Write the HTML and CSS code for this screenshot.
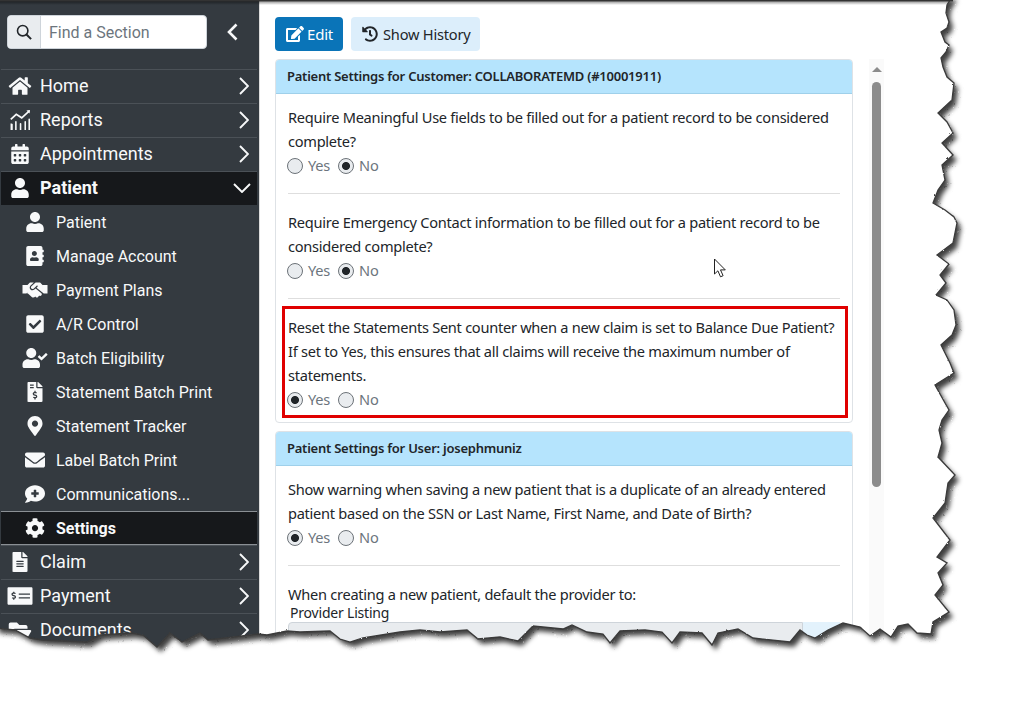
FILE: index.html
```html
<!DOCTYPE html>
<html lang="en">
<head>
<meta charset="utf-8">
<title>Patient Settings</title>
<link rel="stylesheet" href="styles.css">
</head>
<body>
<svg class="defs" aria-hidden="true">
  <symbol id="i-home" viewBox="0 0 576 512"><path d="M280.37 148.26L96 300.11V464a16 16 0 0 0 16 16l112.06-.29a16 16 0 0 0 15.92-16V368a16 16 0 0 1 16-16h64a16 16 0 0 1 16 16v95.64a16 16 0 0 0 16 16.05L464 480a16 16 0 0 0 16-16V300L295.67 148.26a12.19 12.19 0 0 0-15.3 0zM571.6 251.47L488 182.56V44.05a12 12 0 0 0-12-12h-56a12 12 0 0 0-12 12v72.61L318.47 43a48 48 0 0 0-61 0L4.34 251.47a12 12 0 0 0-1.6 16.9l25.5 31A12 12 0 0 0 45.15 301l235.22-193.74a12.19 12.19 0 0 1 15.3 0L530.9 301a12 12 0 0 0 16.9-1.6l25.5-31a12 12 0 0 0-1.7-16.93z"/></symbol>
  <symbol id="i-chart" viewBox="0 0 512 512"><path d="M14 512V352a14 14 0 0 1 28 0h0 14a14 14 0 0 1 14 14v146zM130 512V300a20 20 0 0 1 40 0v212zM250 512V350a20 20 0 0 1 40 0v162zM370 512V300a20 20 0 0 1 40 0v212zM472 512V240a20 20 0 0 1 40 0v272z"/><path d="M20 240L160 110L300 200L490 30" fill="none" stroke="currentColor" stroke-width="44"/><path d="M420 10L512 0L500 90z"/></symbol>
  <symbol id="i-cal" viewBox="0 0 448 512"><path d="M0 464c0 26.5 21.5 48 48 48h352c26.5 0 48-21.5 48-48V192H0v272zm320-196c0-6.6 5.4-12 12-12h40c6.6 0 12 5.4 12 12v40c0 6.6-5.4 12-12 12h-40c-6.6 0-12-5.4-12-12v-40zm0 128c0-6.6 5.4-12 12-12h40c6.6 0 12 5.4 12 12v40c0 6.6-5.4 12-12 12h-40c-6.6 0-12-5.4-12-12v-40zM192 268c0-6.6 5.4-12 12-12h40c6.6 0 12 5.4 12 12v40c0 6.6-5.4 12-12 12h-40c-6.6 0-12-5.4-12-12v-40zm0 128c0-6.6 5.4-12 12-12h40c6.6 0 12 5.4 12 12v40c0 6.6-5.4 12-12 12h-40c-6.6 0-12-5.4-12-12v-40zM64 268c0-6.6 5.4-12 12-12h40c6.6 0 12 5.4 12 12v40c0 6.6-5.4 12-12 12H76c-6.6 0-12-5.4-12-12v-40zm0 128c0-6.6 5.4-12 12-12h40c6.6 0 12 5.4 12 12v40c0 6.6-5.4 12-12 12H76c-6.6 0-12-5.4-12-12v-40zM400 64h-48V16c0-8.8-7.2-16-16-16h-32c-8.8 0-16 7.2-16 16v48H160V16c0-8.8-7.2-16-16-16h-32c-8.8 0-16 7.2-16 16v48H48C21.5 64 0 85.5 0 112v48h448v-48c0-26.5-21.5-48-48-48z"/></symbol>
  <symbol id="i-user" viewBox="0 0 448 512"><path d="M224 256c70.7 0 128-57.3 128-128S294.7 0 224 0 96 57.3 96 128s57.3 128 128 128zm89.6 32h-16.7c-22.2 10.2-46.9 16-72.9 16s-50.6-5.8-72.9-16h-16.7C60.2 288 0 348.2 0 422.4V464c0 26.5 21.5 48 48 48h352c26.5 0 48-21.5 48-48v-41.6c0-74.2-60.2-134.4-134.4-134.4z"/></symbol>
  <symbol id="i-book" viewBox="0 0 448 512"><path d="M436 160c6.6 0 12-5.4 12-12v-40c0-6.6-5.4-12-12-12h-20V48c0-26.5-21.5-48-48-48H48C21.5 0 0 21.5 0 48v416c0 26.5 21.5 48 48 48h320c26.5 0 48-21.5 48-48v-48h20c6.6 0 12-5.4 12-12v-40c0-6.6-5.4-12-12-12h-20v-64h20c6.6 0 12-5.4 12-12v-40c0-6.6-5.4-12-12-12h-20v-64h20zm-228-32c35.3 0 64 28.7 64 64s-28.7 64-64 64-64-28.7-64-64 28.7-64 64-64zm112 236.8c0 10.6-10 19.2-22.4 19.2H118.4C106 384 96 375.4 96 364.8v-19.2c0-31.8 30.1-57.6 67.2-57.6h5c12.3 5.1 25.7 8 39.8 8s27.6-2.9 39.8-8h5c37.1 0 67.2 25.8 67.2 57.6v19.2z"/></symbol>
  <symbol id="i-hands" viewBox="0 0 640 512"><path d="M434.7 64h-85.9c-8 0-15.7 3-21.6 8.4l-98.3 90c-.1.1-.2.3-.3.4-16.6 15.6-16.3 40.5-2.1 56 12.7 13.9 39.4 17.6 56.1 2.7.1-.1.3-.1.4-.2l79.9-73.2c6.5-5.9 16.7-5.5 22.6 1 6 6.5 5.5 16.6-1 22.6l-26.1 23.9L504 313.8c2.9 2.4 5.5 5 7.9 7.7V128l-54.6-54.6c-5.9-6-14.1-9.4-22.6-9.4zM512 128.2v190c20 20 40 30 64 30h64V128.2h-128zM0 348h64c17.7 0 52-10 64-30V128.2H0V348zm483.9-9.3L334.6 217.5l-30 27.5c-29.7 27.1-75.2 24.5-101.7-4.4-26.9-29.4-24.8-74.9 4.4-101.7L289.1 64h-83.8c-8.5 0-16.6 3.4-22.6 9.4L128 128v223.9h18.3l90.5 81.9c27.4 22.3 67.7 18.1 90-9.3l.2-.2 17.9 15.5c15.9 13 39.4 10.5 52.3-5.4l31.4-38.6 5.4 4.4c13.7 11.1 33.9 9.1 45-4.7l9.5-11.7c11.2-13.8 9.1-33.9-4.6-45.1z"/></symbol>
  <symbol id="i-check" viewBox="0 0 448 512"><path d="M400 480H48c-26.51 0-48-21.49-48-48V80c0-26.51 21.49-48 48-48h352c26.51 0 48 21.49 48 48v352c0 26.51-21.49 48-48 48zm-204.686-98.059l184-184c6.248-6.248 6.248-16.379 0-22.627l-22.627-22.627c-6.248-6.248-16.379-6.249-22.628 0L184 302.745l-70.059-70.059c-6.248-6.248-16.379-6.248-22.628 0L68.686 255.314c-6.248 6.248-6.248 16.379 0 22.627l104 104c6.249 6.25 16.379 6.25 22.628.001z"/></symbol>
  <symbol id="i-usercheck" viewBox="0 0 640 512"><path d="M224 256c70.7 0 128-57.3 128-128S294.7 0 224 0 96 57.3 96 128s57.3 128 128 128zm89.6 32h-16.7c-22.2 10.2-46.9 16-72.9 16s-50.6-5.8-72.9-16h-16.7C60.2 288 0 348.2 0 422.4V464c0 26.5 21.5 48 48 48h352c26.5 0 48-21.5 48-48v-41.6c0-74.2-60.2-134.4-134.4-134.4zm323-128.4l-27.8-28.1c-4.6-4.7-12.1-4.7-16.8-.1l-104.8 104-45.5-45.8c-4.6-4.7-12.1-4.7-16.8-.1l-28.1 27.9c-4.7 4.6-4.7 12.1-.1 16.8l81.7 82.3c4.6 4.7 12.1 4.7 16.8.1l141.3-140.2c4.6-4.7 4.7-12.2.1-16.8z"/></symbol>
  <symbol id="i-invoice" viewBox="0 0 384 512"><path d="M377 105L279.1 7c-4.5-4.5-10.6-7-17-7H256v128h128v-6.1c0-6.3-2.5-12.4-7-16.9zm-153 31V0H24C10.7 0 0 10.7 0 24v464c0 13.3 10.7 24 24 24h336c13.3 0 24-10.7 24-24V160H248c-13.2 0-24-10.8-24-24zM64 72c0-4.42 3.58-8 8-8h80c4.42 0 8 3.58 8 8v16c0 4.42-3.58 8-8 8H72c-4.42 0-8-3.58-8-8V72zm0 80v-16c0-4.42 3.58-8 8-8h80c4.42 0 8 3.58 8 8v16c0 4.42-3.58 8-8 8H72c-4.42 0-8-3.58-8-8zm144 263.88V440c0 4.42-3.58 8-8 8h-16c-4.42 0-8-3.58-8-8v-24.29c-11.29-.58-22.27-4.52-31.37-11.35-3.9-2.93-4.1-8.77-.57-12.14l11.75-11.21c2.77-2.64 6.89-2.76 10.13-.73 3.87 2.42 8.26 3.72 12.82 3.72h28.11c6.5 0 11.8-5.92 11.8-13.19 0-5.95-3.61-11.19-8.77-12.73l-45-13.5c-18.59-5.58-31.58-23.42-31.58-43.39 0-24.52 19.05-44.44 42.67-45.07V232c0-4.42 3.58-8 8-8h16c4.42 0 8 3.58 8 8v24.29c11.29.58 22.27 4.51 31.37 11.35 3.9 2.93 4.1 8.77.57 12.14l-11.75 11.21c-2.77 2.64-6.89 2.76-10.13.73-3.87-2.43-8.26-3.72-12.82-3.72h-28.11c-6.5 0-11.8 5.92-11.8 13.19 0 5.95 3.61 11.19 8.77 12.73l45 13.5c18.59 5.58 31.58 23.42 31.58 43.39 0 24.53-19.05 44.44-42.67 45.07z"/></symbol>
  <symbol id="i-pin" viewBox="0 0 384 512"><path d="M172.268 501.67C26.97 291.031 0 268.413 0 192 0 85.961 85.961 0 192 0s192 85.961 192 192c0 76.413-26.97 99.031-172.268 309.67-9.535 13.774-29.93 13.773-39.464 0zM192 272c44.183 0 80-35.817 80-80s-35.817-80-80-80-80 35.817-80 80 35.817 80 80 80z"/></symbol>
  <symbol id="i-mail" viewBox="0 0 512 512"><path d="M502.3 190.8c3.9-3.1 9.7-.2 9.7 4.7V400c0 26.5-21.5 48-48 48H48c-26.5 0-48-21.5-48-48V195.6c0-5 5.7-7.8 9.7-4.7 22.4 17.4 52.1 39.5 154.1 113.6 21.1 15.4 56.7 47.8 92.2 47.6 35.7.3 72-32.8 92.3-47.6 102-74.1 131.6-96.3 154-113.7zM256 320c23.2.4 56.6-29.2 73.4-41.4 132.7-96.3 142.8-104.7 173.4-128.7 5.8-4.5 9.2-11.5 9.2-18.9v-19c0-26.5-21.5-48-48-48H48C21.5 64 0 85.5 0 112v19c0 7.4 3.4 14.3 9.2 18.9 30.6 23.9 40.7 32.4 173.4 128.7 16.8 12.2 50.2 41.8 73.4 41.4z"/></symbol>
  <symbol id="i-comment" viewBox="0 0 512 512"><path d="M256 32C114.62 32 0 125.12 0 240c0 49.56 21.41 95 57 130.74C44.46 421.05 2.7 466 2.2 466.5A8 8 0 0 0 8 480c66.26 0 116-31.75 140.6-51.38A304.66 304.66 0 0 0 256 448c141.39 0 256-93.12 256-208S397.39 32 256 32zm96 232a8 8 0 0 1-8 8h-56v56a8 8 0 0 1-8 8h-48a8 8 0 0 1-8-8v-56h-56a8 8 0 0 1-8-8v-48a8 8 0 0 1 8-8h56v-56a8 8 0 0 1 8-8h48a8 8 0 0 1 8 8v56h56a8 8 0 0 1 8 8z"/></symbol>
  <symbol id="i-cog" viewBox="0 0 512 512"><path d="M487.4 315.7l-42.6-24.6c4.3-23.2 4.3-47 0-70.2l42.6-24.6c4.9-2.8 7.1-8.6 5.5-14-11.1-35.6-30-67.8-54.7-94.6-3.8-4.1-10-5.1-14.8-2.3L380.8 110c-17.9-15.4-38.5-27.3-60.8-35.1V25.8c0-5.6-3.9-10.5-9.4-11.7-36.7-8.2-74.3-7.8-109.2 0-5.5 1.2-9.4 6.1-9.4 11.7V75c-22.2 7.9-42.8 19.8-60.8 35.1L88.7 85.5c-4.9-2.8-11-1.9-14.8 2.3-24.7 26.7-43.6 58.9-54.7 94.6-1.7 5.4.6 11.2 5.5 14L67.3 221c-4.3 23.2-4.3 47 0 70.2l-42.6 24.6c-4.9 2.8-7.1 8.6-5.5 14 11.1 35.6 30 67.8 54.7 94.6 3.8 4.1 10 5.1 14.8 2.3l42.6-24.6c17.9 15.4 38.5 27.3 60.8 35.1v49.2c0 5.6 3.9 10.5 9.4 11.7 36.7 8.2 74.3 7.8 109.2 0 5.5-1.2 9.4-6.1 9.4-11.7v-49.2c22.2-7.9 42.8-19.8 60.8-35.1l42.6 24.6c4.9 2.8 11 1.9 14.8-2.3 24.7-26.7 43.6-58.9 54.7-94.6 1.5-5.5-.7-11.3-5.6-14.1zM256 336c-44.1 0-80-35.9-80-80s35.9-80 80-80 80 35.9 80 80-35.9 80-80 80z"/></symbol>
  <symbol id="i-file" viewBox="0 0 384 512"><path d="M224 136V0H24C10.7 0 0 10.7 0 24v464c0 13.3 10.7 24 24 24h336c13.3 0 24-10.7 24-24V160H248c-13.2 0-24-10.8-24-24zm64 236c0 6.6-5.4 12-12 12H108c-6.6 0-12-5.4-12-12v-8c0-6.6 5.4-12 12-12h168c6.6 0 12 5.4 12 12v8zm0-64c0 6.6-5.4 12-12 12H108c-6.6 0-12-5.4-12-12v-8c0-6.6 5.4-12 12-12h168c6.6 0 12 5.4 12 12v8zm0-72v8c0 6.6-5.4 12-12 12H108c-6.6 0-12-5.4-12-12v-8c0-6.6 5.4-12 12-12h168c6.6 0 12 5.4 12 12zm96-114.1v6.1H256V0h6.1c6.4 0 12.5 2.5 17 7l97.9 98c4.5 4.5 7 10.6 7 16.9z"/></symbol>
  <symbol id="i-money" viewBox="0 0 640 512"><path d="M608 32H32C14.33 32 0 46.33 0 64v384c0 17.67 14.33 32 32 32h576c17.67 0 32-14.33 32-32V64c0-17.67-14.33-32-32-32zM176 327.88V344c0 4.42-3.58 8-8 8h-16c-4.42 0-8-3.58-8-8v-16.29c-11.29-.58-22.27-4.52-31.37-11.35-3.9-2.93-4.1-8.77-.57-12.14l11.75-11.21c2.77-2.64 6.89-2.76 10.13-.73 3.87 2.42 8.26 3.72 12.82 3.72h28.11c6.5 0 11.8-5.92 11.8-13.19 0-5.95-3.61-11.19-8.77-12.73l-45-13.5c-18.59-5.58-31.58-23.42-31.58-43.39 0-24.52 19.05-44.44 42.67-45.07V152c0-4.42 3.58-8 8-8h16c4.42 0 8 3.58 8 8v16.29c11.29.58 22.27 4.51 31.37 11.35 3.9 2.93 4.1 8.77.57 12.14l-11.75 11.21c-2.77 2.64-6.89 2.76-10.13.73-3.87-2.43-8.26-3.72-12.82-3.72h-28.11c-6.5 0-11.8 5.92-11.8 13.19 0 5.95 3.61 11.19 8.77 12.73l45 13.5c18.59 5.58 31.58 23.42 31.58 43.39 0 24.53-19.05 44.44-42.67 45.07zM576 312c0 4.42-3.58 8-8 8H296c-4.42 0-8-3.58-8-8v-16c0-4.42 3.58-8 8-8h272c4.42 0 8 3.58 8 8v16zm0-96c0 4.42-3.58 8-8 8H296c-4.42 0-8-3.58-8-8v-16c0-4.42 3.58-8 8-8h272c4.42 0 8 3.58 8 8v16z"/></symbol>
  <symbol id="i-folder" viewBox="0 0 576 512"><path d="M572.694 292.093L500.27 416.248A63.997 63.997 0 0 1 444.989 448H45.025c-18.523 0-30.064-20.093-20.731-36.093l72.424-124.155A64 64 0 0 1 152 256h399.964c18.523 0 30.064 20.093 20.73 36.093zM152 224h328v-48c0-26.51-21.49-48-48-48H272l-64-64H48C21.49 64 0 85.49 0 112v278.046l69.077-118.418C86.214 242.25 117.989 224 152 224z"/></symbol>
  <symbol id="i-edit" viewBox="0 0 576 512"><path d="M402.6 83.2l90.2 90.2c3.8 3.8 3.8 10 0 13.8L274.4 405.6l-92.8 10.3c-12.4 1.4-22.9-9.1-21.5-21.5l10.3-92.8L388.8 83.2c3.8-3.8 10-3.8 13.8 0zm162-22.9l-48.8-48.8c-15.2-15.2-39.9-15.2-55.2 0l-35.4 35.4c-3.8 3.8-3.8 10 0 13.8l90.2 90.2c3.8 3.8 10 3.8 13.8 0l35.4-35.4c15.2-15.3 15.2-40 0-55.2zM384 346.2V448H64V128h229.8c3.2 0 6.2-1.3 8.5-3.5l40-40c7.6-7.6 2.2-20.5-8.5-20.5H48C21.5 64 0 85.5 0 112v352c0 26.5 21.5 48 48 48h352c26.5 0 48-21.5 48-48V306.2c0-10.7-12.9-16-20.5-8.5l-40 40c-2.2 2.3-3.5 5.3-3.5 8.5z"/></symbol>
  <symbol id="i-history" viewBox="0 0 512 512"><path d="M504 255.531c.253 136.64-111.18 248.372-247.82 248.468-59.015.042-113.223-20.53-155.822-54.911-11.077-8.94-11.905-25.541-1.839-35.607l11.267-11.267c8.609-8.609 22.353-9.551 31.891-1.984C173.062 425.135 212.781 440 256 440c101.705 0 184-82.311 184-184 0-101.705-82.311-184-184-184-48.814 0-93.149 18.969-126.068 49.932l50.754 50.754c10.08 10.08 2.941 27.314-11.313 27.314H24c-8.837 0-16-7.163-16-16V38.627c0-14.254 17.234-21.393 27.314-11.314l49.372 49.372C129.209 34.136 189.552 8 256 8c136.81 0 247.747 110.78 248 247.531zm-180.912 78.784l9.823-12.63c8.138-10.463 6.253-25.542-4.21-33.679L288 256.349V152c0-13.255-10.745-24-24-24h-16c-13.255 0-24 10.745-24 24v135.651l65.409 50.874c10.463 8.137 25.541 6.253 33.679-4.21z"/></symbol>
  <symbol id="i-right" viewBox="0 0 10 18"><path d="M1 1l8 8-8 8" fill="none" stroke="currentColor" stroke-width="1.9"/></symbol>
  <symbol id="i-down" viewBox="0 0 18 10"><path d="M1 1l8 8 8-8" fill="none" stroke="currentColor" stroke-width="1.9"/></symbol>
  <symbol id="i-left" viewBox="0 0 11 18"><path d="M9.5 1.5L2 9l7.5 7.5" fill="none" stroke="currentColor" stroke-width="2.6"/></symbol>
</svg>

<div class="app">
  <aside class="sidebar">
    <div class="search-row">
      <div class="search">
        <span class="search-addon">
          <svg width="16" height="16" viewBox="0 0 16 16"><circle cx="6.7" cy="6.7" r="5.2" fill="none" stroke="#212529" stroke-width="1.6"/><path d="M10.5 10.5l4.6 4.6" stroke="#212529" stroke-width="2" fill="none"/></svg>
        </span>
        <span class="search-input">Find a Section</span>
      </div>
      <svg class="collapse"><use href="#i-left"/></svg>
    </div>
    <nav class="nav">
      <a class="item"><svg class="ic"><use href="#i-home"/></svg><span class="label">Home</span><svg class="chev"><use href="#i-right"/></svg></a>
      <a class="item"><svg class="ic"><use href="#i-chart"/></svg><span class="label">Reports</span><svg class="chev"><use href="#i-right"/></svg></a>
      <a class="item"><svg class="ic"><use href="#i-cal"/></svg><span class="label">Appointments</span><svg class="chev"><use href="#i-right"/></svg></a>
      <a class="item open"><svg class="ic"><use href="#i-user"/></svg><span class="label">Patient</span><svg class="chev-down"><use href="#i-down"/></svg></a>
      <a class="sub"><svg class="ic"><use href="#i-user"/></svg><span>Patient</span></a>
      <a class="sub"><svg class="ic"><use href="#i-book"/></svg><span>Manage Account</span></a>
      <a class="sub"><svg class="ic"><use href="#i-hands"/></svg><span>Payment Plans</span></a>
      <a class="sub"><svg class="ic"><use href="#i-check"/></svg><span>A/R Control</span></a>
      <a class="sub"><svg class="ic"><use href="#i-usercheck"/></svg><span>Batch Eligibility</span></a>
      <a class="sub"><svg class="ic"><use href="#i-invoice"/></svg><span>Statement Batch Print</span></a>
      <a class="sub"><svg class="ic"><use href="#i-pin"/></svg><span>Statement Tracker</span></a>
      <a class="sub"><svg class="ic"><use href="#i-mail"/></svg><span>Label Batch Print</span></a>
      <a class="sub"><svg class="ic"><use href="#i-comment"/></svg><span>Communications...</span></a>
      <a class="sub current"><svg class="ic"><use href="#i-cog"/></svg><span>Settings</span></a>
      <a class="item"><svg class="ic"><use href="#i-file"/></svg><span class="label">Claim</span><svg class="chev"><use href="#i-right"/></svg></a>
      <a class="item"><svg class="ic"><use href="#i-money"/></svg><span class="label">Payment</span><svg class="chev"><use href="#i-right"/></svg></a>
      <a class="item"><svg class="ic"><use href="#i-folder"/></svg><span class="label">Documents</span><svg class="chev"><use href="#i-right"/></svg></a>
    </nav>
  </aside>

  <main class="main">
    <div class="content">
      <div class="toolbar">
        <button class="btn btn-edit"><svg class="btn-ic"><use href="#i-edit"/></svg>Edit</button>
        <button class="btn btn-history"><svg class="btn-ic"><use href="#i-history"/></svg>Show History</button>
      </div>
      <section class="card">
        <h2 class="card-head">Patient Settings for Customer: COLLABORATEMD (#10001911)</h2>
        <div class="card-body">
          <div class="q">
            <p>Require Meaningful Use fields to be filled out for a patient record to be considered complete?</p>
            <div class="radios"><label><input type="radio" disabled>Yes</label><label><input type="radio" disabled checked>No</label></div>
          </div>
          <hr>
          <div class="q">
            <p>Require Emergency Contact information to be filled out for a patient record to be considered complete?</p>
            <div class="radios"><label><input type="radio" disabled>Yes</label><label><input type="radio" disabled checked>No</label></div>
          </div>
          <hr class="tight">
          <div class="q highlight">
            <p>Reset the Statements Sent counter when a new claim is set to Balance Due Patient?<br>If set to Yes, this ensures that all claims will receive the maximum number of statements.</p>
            <div class="radios"><label><input type="radio" disabled checked>Yes</label><label><input type="radio" disabled>No</label></div>
          </div>
        </div>
      </section>
      <section class="card">
        <h2 class="card-head">Patient Settings for User: josephmuniz</h2>
        <div class="card-body">
          <div class="q">
            <p>Show warning when saving a new patient that is a duplicate of an already entered patient based on the SSN or Last Name, First Name, and Date of Birth?</p>
            <div class="radios"><label><input type="radio" disabled checked>Yes</label><label><input type="radio" disabled>No</label></div>
          </div>
          <hr>
          <div class="q">
            <p>When creating a new patient, default the provider to:</p>
            <div class="field-label">Provider Listing</div>
            <div class="field"><span class="field-box"></span><span class="field-btn"></span></div>
          </div>
        </div>
      </section>
    </div>
    <div class="scrollbar">
      <span class="arrow"></span>
      <span class="thumb"></span>
    </div>
  </main>
</div>

<svg class="cursor" width="14" height="22" viewBox="0 0 14 22"><path d="M1.5 1v15l3.4-3.2 2.6 6 2.6-1.1-2.6-5.8h4.8z" fill="#fff" stroke="#222" stroke-width="1"/></svg>

<svg class="torn" width="1009" height="701" viewBox="0 0 1009 701" aria-hidden="true">
  <defs>
    <filter id="rough" x="-30" y="-30" width="1080" height="780" filterUnits="userSpaceOnUse">
      <feTurbulence type="fractalNoise" baseFrequency="0.35" numOctaves="2" seed="4"/>
      <feDisplacementMap in="SourceGraphic" scale="2"/>
    </filter>
    <filter id="soft" x="-30" y="-30" width="1080" height="780" filterUnits="userSpaceOnUse"><feGaussianBlur stdDeviation="2.4"/></filter>
    <clipPath id="outside"><path d="M953,-5 L947,5 946,13 949,22 947,28 941,32 945,42 949,45 946,52 941,58 943,67 947,77 954,83 952,100 938,113 947,122 953,133 942,143 953,155 942,165 945,180 938,190 933,203 945,210 954,217 957,223 955,233 953,243 937,255 949,264 940,275 946,283 936,295 947,300 954,310 956,325 952,335 941,345 945,353 950,363 954,373 935,385 945,403 949,410 942,420 939,430 942,443 938,457 955,475 948,483 945,503 933,518 950,540 937,557 947,563 938,573 943,585 935,595 949,612 933,622 931,634 917,633 908,624 898,626 891,637 880,629 870,636 860,627 843,623 828,630 815,638 807,635 800,630 790,642 753,638 738,629 718,633 712,645 702,633 680,632 672,643 662,632 645,630 620,631 610,643 603,634 587,632 572,625 563,629 533,626 518,641 500,637 478,639 467,630 440,632 420,630 400,632 363,638 350,642 340,639 330,631 300,632 287,631 267,635 258,634 208,640 200,633 182,642 170,633 157,647 143,635 132,633 100,635 87,642 43,640 30,638 15,630 -5,628 L-30,730 1040,730 1040,-5 Z"/></clipPath>
    <linearGradient id="topfade" x1="0" y1="0" x2="0" y2="1"><stop offset="0" stop-color="#000" stop-opacity=".45"/><stop offset="1" stop-color="#000" stop-opacity="0"/></linearGradient>
  </defs>
  <rect class="top-shade" x="0" y="1" width="953" height="4" fill="url(#topfade)"/>
  <g filter="url(#rough)">
    <path fill="#fff" d="M953,-5 L947,5 946,13 949,22 947,28 941,32 945,42 949,45 946,52 941,58 943,67 947,77 954,83 952,100 938,113 947,122 953,133 942,143 953,155 942,165 945,180 938,190 933,203 945,210 954,217 957,223 955,233 953,243 937,255 949,264 940,275 946,283 936,295 947,300 954,310 956,325 952,335 941,345 945,353 950,363 954,373 935,385 945,403 949,410 942,420 939,430 942,443 938,457 955,475 948,483 945,503 933,518 950,540 937,557 947,563 938,573 943,585 935,595 949,612 933,622 931,634 917,633 908,624 898,626 891,637 880,629 870,636 860,627 843,623 828,630 815,638 807,635 800,630 790,642 753,638 738,629 718,633 712,645 702,633 680,632 672,643 662,632 645,630 620,631 610,643 603,634 587,632 572,625 563,629 533,626 518,641 500,637 478,639 467,630 440,632 420,630 400,632 363,638 350,642 340,639 330,631 300,632 287,631 267,635 258,634 208,640 200,633 182,642 170,633 157,647 143,635 132,633 100,635 87,642 43,640 30,638 15,630 -5,628 L-30,730 1040,730 1040,-5 Z"/>
    <g clip-path="url(#outside)">
      <path fill="#000" fill-opacity=".75" filter="url(#soft)" transform="translate(4 5)" d="M953,-5 L947,5 946,13 949,22 947,28 941,32 945,42 949,45 946,52 941,58 943,67 947,77 954,83 952,100 938,113 947,122 953,133 942,143 953,155 942,165 945,180 938,190 933,203 945,210 954,217 957,223 955,233 953,243 937,255 949,264 940,275 946,283 936,295 947,300 954,310 956,325 952,335 941,345 945,353 950,363 954,373 935,385 945,403 949,410 942,420 939,430 942,443 938,457 955,475 948,483 945,503 933,518 950,540 937,557 947,563 938,573 943,585 935,595 949,612 933,622 931,634 917,633 908,624 898,626 891,637 880,629 870,636 860,627 843,623 828,630 815,638 807,635 800,630 790,642 753,638 738,629 718,633 712,645 702,633 680,632 672,643 662,632 645,630 620,631 610,643 603,634 587,632 572,625 563,629 533,626 518,641 500,637 478,639 467,630 440,632 420,630 400,632 363,638 350,642 340,639 330,631 300,632 287,631 267,635 258,634 208,640 200,633 182,642 170,633 157,647 143,635 132,633 100,635 87,642 43,640 30,638 15,630 -5,628 L-30,-30 Z"/>
    </g>
    <path fill="none" stroke="#3a3a3a" stroke-width="1.3" d="M953,-5 L947,5 946,13 949,22 947,28 941,32 945,42 949,45 946,52 941,58 943,67 947,77 954,83 952,100 938,113 947,122 953,133 942,143 953,155 942,165 945,180 938,190 933,203 945,210 954,217 957,223 955,233 953,243 937,255 949,264 940,275 946,283 936,295 947,300 954,310 956,325 952,335 941,345 945,353 950,363 954,373 935,385 945,403 949,410 942,420 939,430 942,443 938,457 955,475 948,483 945,503 933,518 950,540 937,557 947,563 938,573 943,585 935,595 949,612 933,622 931,634 917,633 908,624 898,626 891,637 880,629 870,636 860,627 843,623 828,630 815,638 807,635 800,630 790,642 753,638 738,629 718,633 712,645 702,633 680,632 672,643 662,632 645,630 620,631 610,643 603,634 587,632 572,625 563,629 533,626 518,641 500,637 478,639 467,630 440,632 420,630 400,632 363,638 350,642 340,639 330,631 300,632 287,631 267,635 258,634 208,640 200,633 182,642 170,633 157,647 143,635 132,633 100,635 87,642 43,640 30,638 15,630 -5,628"/>
  </g>
  <rect x="0" y="0" width="953" height="1.4" fill="#333"/>
</svg>
</body>
</html>
```

FILE: styles.css
```css
* { box-sizing: border-box; }
html, body { margin: 0; padding: 0; height: 100%; }
body {
  position: relative;
  width: 1009px;
  height: 701px;
  overflow: hidden;
  background: #fff;
  font-family: "Noto Sans", sans-serif;
  color: #212529;
}
.defs { position: absolute; width: 0; height: 0; }

.app { display: flex; height: 701px; }

/* Sidebar */
.sidebar {
  flex: 0 0 260px;
  height: 701px;
  background: #343a40;
  border-right: 1px solid #dcdcdc;
  padding: 0 1px 0 1px;
  font-family: Roboto, sans-serif;
  color: #f8f9fa;
  overflow: hidden;
}
.search-row {
  display: flex;
  align-items: center;
  height: 69px;
  padding: 0 0 5px 6px;
}
.search {
  display: flex;
  width: 200px;
  height: 34px;
  background: #fff;
  border-radius: 4px;
  overflow: hidden;
  border: 1px solid #ced4da;
}
.search-addon {
  flex: 0 0 33px;
  display: flex;
  align-items: center;
  justify-content: center;
  background: #e9ecef;
  border-right: 1px solid #ced4da;
}
.search-input {
  flex: 1;
  padding-left: 8px;
  font-size: 16px;
  line-height: 34px;
  color: #6c757d;
}
.collapse { width: 11px; height: 18px; margin-left: 20px; color: #f8f9fa; }

.nav { display: flex; flex-direction: column; width: 256px; }
.item {
  display: flex;
  align-items: center;
  height: 34px;
  padding: 0 0 2px 6px;
  border-top: 1px solid #4b5157;
  font-size: 18px;
}
.item .label { flex: 1; }
.item.open { background: #16181b; font-weight: 700; height: 34px; border-top-color: #4b5157; }
.ic { width: 26px; height: 20px; flex: none; margin-right: 7px; fill: #f8f9fa; color: #f8f9fa; }
.chev { width: 10px; height: 18px; margin-right: 8px; color: #f8f9fa; }
.chev-down { width: 18px; height: 10px; margin-right: 6px; color: #f8f9fa; }
.sub {
  display: flex;
  align-items: center;
  height: 34px;
  padding-left: 21px;
  font-size: 16px;
}
.sub .ic { margin-right: 8px; }
.sub.current {
  background: #16181b;
  font-weight: 700;
  border-top: 1px solid #8a8f94;
  border-bottom: 1px solid #8a8f94;
}

/* Main */
.main {
  flex: 1;
  display: flex;
  height: 701px;
  overflow: hidden;
  padding-top: 17px;
  padding-left: 15px;
}
.content { flex: 0 0 578px; }
.toolbar { display: flex; gap: 8px; margin-bottom: 8px; }
.btn {
  display: flex;
  align-items: center;
  height: 34px;
  border: 0;
  border-radius: 4px;
  padding: 0 0 1px 11px;
  font-family: "Noto Sans", sans-serif;
  font-size: 14.6px;
  letter-spacing: -0.2px;
  white-space: nowrap;
}
.btn-edit { background: #0a74b8; color: #fff; width: 68px; font-size: 15px; }
.btn-history { background: #dceefb; color: #212529; width: 129px; }
.btn-ic { width: 18px; height: 16px; margin: 1px 3px 0 0; fill: currentColor; }
.btn-history .btn-ic { width: 16px; margin-right: 5px; }

.card {
  border: 1px solid #dee2e6;
  border-radius: 4px;
  margin-bottom: 8px;
  overflow: hidden;
}
.card-head {
  margin: 0;
  height: 34px;
  background: #b5e4fd;
  border-bottom: 1px solid #9fd0ea;
  padding: 0 12px 0 11px;
  font-size: 13px;
  font-weight: 600;
  letter-spacing: -0.24px;
  line-height: 33px;
}
.card-body { padding: 12px 12px 4px 12px; }
.q p {
  margin: -1px 0 1px;
  font-size: 14.6px;
  letter-spacing: -0.27px;
  line-height: 24px;
}
.radios {
  display: flex;
  gap: 8px;
  height: 24px;
  align-items: flex-start;
  font-size: 14.6px;
  letter-spacing: -0.22px;
  line-height: 22px;
  color: #6c757d;
}
.radios label { display: flex; align-items: flex-start; }
.radios input {
  appearance: none;
  width: 16px;
  height: 16px;
  margin: 4px 5px 0 -1px;
  border: 1.5px solid #6c7278;
  border-radius: 50%;
  background: #e9ecef;
}
.radios input:checked { background: radial-gradient(circle, #212529 0 3.6px, #e9ecef 4.4px); }
.radios label + label input { margin-left: 0; }
.card-body hr {
  border: 0;
  height: 1px;
  background: #dedede;
  margin: 15px 0 17px;
}
.card-body hr.tight { margin: 15px 0 7px; }
.highlight {
  border: 3px solid #e00000;
  margin: 0 -8px 0 -6px;
  padding: 7px 5px 3px 3px;
}
.field-label {
  font-size: 14px;
  letter-spacing: -0.2px;
  line-height: 18px;
  padding-left: 2px;
  margin-top: -3px;
}
.field { display: flex; height: 38px; }
.field-box { flex: 0 0 515px; background: #e9ecef; border: 1px solid #ced4da; border-radius: 4px 0 0 4px; }
.field-btn { flex: 1; background: #e3f2fc; }

/* Scrollbar */
.scrollbar {
  flex: 0 0 15px;
  margin: 42px 0 0 16px;
  background: #fafafa;
  display: flex;
  flex-direction: column;
  align-items: center;
}
.arrow {
  width: 0;
  height: 0;
  margin-top: 8px;
  border-left: 5px solid transparent;
  border-right: 5px solid transparent;
  border-bottom: 5px solid #8c8c8c;
}
.thumb {
  width: 9px;
  height: 405px;
  margin-top: 10px;
  background: #8c8c8c;
  border-radius: 5px;
}

/* Overlays */
.cursor { position: absolute; left: 713px; top: 258px; }
.torn { position: absolute; left: 0; top: 0; pointer-events: none; }
```
